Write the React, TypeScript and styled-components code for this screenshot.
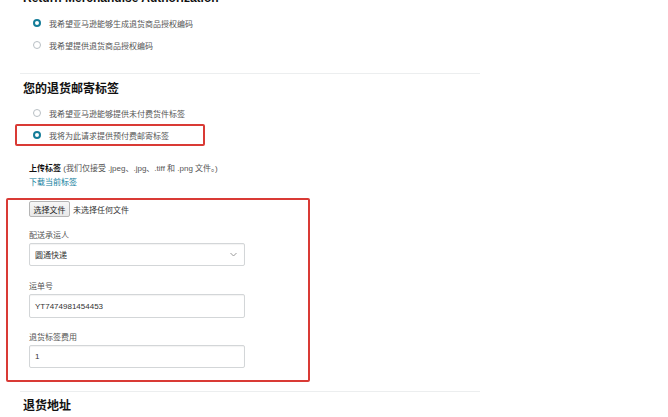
import React from 'react'
import styled, { createGlobalStyle } from 'styled-components'

const Global = createGlobalStyle`
  html, body { margin: 0; padding: 0; background: #fff; }
  body {
    font-family: "Liberation Sans", "Noto Sans CJK SC", sans-serif;
    color: #333;
    overflow: hidden;
  }
`

/* ------------------------ styled ------------------------ */
const Page = styled.div`
  width: 668px;
  margin-top: -10px;
  padding-left: 23px;
  box-sizing: border-box;
`
const Heading = styled.div<{ top?: number }>`
  margin-top: ${({ top }) => top ?? 0}px;
  font-size: 12px;
  line-height: 16px;
  font-weight: 700;
  color: #111;
`
const Options = styled.div<{ top: number }>`
  display: flex;
  flex-direction: column;
  gap: 6px;
  margin-top: ${({ top }) => top}px;
`
const Row = styled.label`
  display: flex;
  align-items: center;
  gap: 8px;
  height: 16px;
  padding-left: 10px;
  font-size: 8px;
  color: #555;
`
const Radio = styled.span<{ checked?: boolean }>`
  width: 8px; height: 8px;
  border-radius: 50%;
  box-sizing: border-box;
  flex: none;
  ${({ checked }) => checked
    ? `border: 2.5px solid #137c98; background:#fff;`
    : `border: 1px solid #b8bfc4; background:#fff;`}
`
const Divider = styled.div<{ top: number }>`
  width: 460px;
  height: 1px;
  margin: ${({ top }) => top}px 0 0 -3px;
  background: #eceeef;
`
const Highlight = styled.div`
  margin: 3px 0 0 -8px;
  width: 190px;
  height: 22px;
  box-sizing: border-box;
  border: 2px solid #d93a35;
  border-radius: 2px;
  display: flex;
  align-items: center;
  padding-left: 6px;
`
const Upload = styled.div`
  margin-top: 16px;
  padding-left: 6px;
  font-size: 8px;
  line-height: 14px;
  color: #555;
  b { color: #111; font-weight: 700; }
`
const Link = styled.a`
  display: block;
  color: #0e7d9c;
  text-decoration: none;
`
const Box = styled.div`
  margin: 8px 0 0 -17px;
  width: 304px;
  height: 184px;
  box-sizing: border-box;
  border: 2px solid #d93a35;
  border-radius: 2px;
  padding: 1px 0 0 21px;
  display: flex;
  flex-direction: column;
`
const FileRow = styled.div`
  display: flex;
  align-items: center;
  gap: 3px;
  height: 16px;
  font-size: 8px;
  color: #333;
`
const FileBtn = styled.button`
  height: 16px;
  width: 41px;
  padding: 0;
  font: inherit;
  font-size: 8px;
  color: #222;
  background: linear-gradient(#f7f7f7, #e8e8e8);
  border: 1px solid #b5b5b5;
  border-radius: 2px;
`
const Field = styled.div<{ gap: number }>`
  margin-top: ${({ gap }) => gap}px;
  display: flex;
  flex-direction: column;
`
const Label = styled.div`
  font-size: 8px;
  line-height: 14px;
  color: #555;
`
const Input = styled.div<{ h: number }>`
  width: 216px;
  height: ${({ h }) => h}px;
  box-sizing: border-box;
  border: 1px solid #d3d6d8;
  border-radius: 2px;
  box-shadow: inset 0 1px 1px rgba(0,0,0,.05);
  display: flex;
  align-items: center;
  justify-content: space-between;
  padding: 0 7px 0 5px;
  font-size: 8px;
  color: #333;
  background: #fff;
`
const Chevron = styled.svg`
  width: 7px; height: 5px;
`

export default function App() {
  return (
    <Page>
      <Global />
      <Heading>Return Merchandise Authorization</Heading>
      <Options top={9}>
        <Row><Radio checked />我希望亚马逊能够生成退货商品授权编码</Row>
        <Row><Radio />我希望提供退货商品授权编码</Row>
      </Options>

      <Divider top={20} />

      <Heading top={7}>您的退货邮寄标签</Heading>
      <Options top={8}>
        <Row><Radio />我希望亚马逊能够提供未付费货件标签</Row>
      </Options>
      <Highlight>
        <Row><Radio checked />我将为此请求提供预付费邮寄标签</Row>
      </Highlight>

      <Upload>
        <div><b>上传标签</b> (我们仅接受 .jpeg、.jpg、.tiff 和 .png 文件。)</div>
        <Link>下载当前标签</Link>
      </Upload>

      <Box>
        <FileRow>
          <FileBtn>选择文件</FileBtn>
          <span>未选择任何文件</span>
        </FileRow>
        <Field gap={12}>
          <Label>配送承运人</Label>
          <Input h={23}>
            <span>圆通快递</span>
            <Chevron viewBox="0 0 7 5">
              <path d="M0.5 1 L3.5 4 L6.5 1" fill="none" stroke="#999" strokeWidth="1" />
            </Chevron>
          </Input>
        </Field>
        <Field gap={14}>
          <Label>运单号</Label>
          <Input h={24}>YT7474981454453</Input>
        </Field>
        <Field gap={13}>
          <Label>退货标签费用</Label>
          <Input h={23}>1</Input>
        </Field>
      </Box>

      <Divider top={9} />
      <Heading top={6}>退货地址</Heading>
    </Page>
  )
}
